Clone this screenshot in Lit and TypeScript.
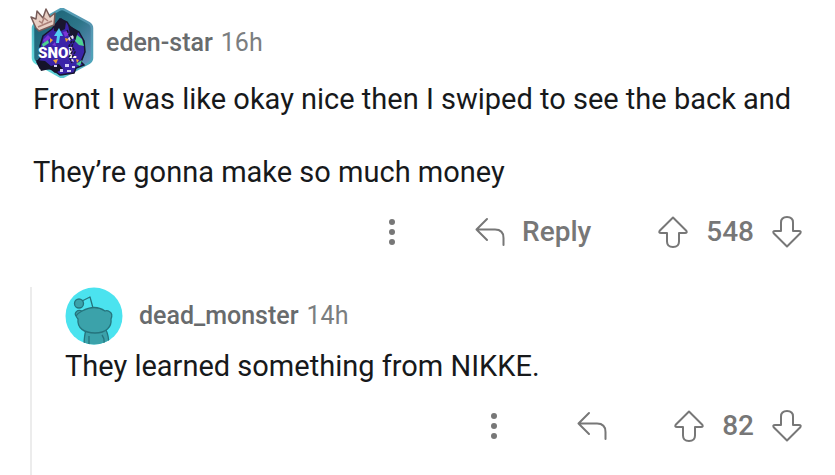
import { LitElement, html, svg, css, nothing } from "lit";
import { customElement, property } from "lit/decorators.js";

const moreIcon = html`<svg width="8" height="28" viewBox="0 0 8 28" fill="currentColor" aria-hidden="true">
  <circle cx="4" cy="4" r="3" /><circle cx="4" cy="14" r="3" /><circle cx="4" cy="24" r="3" />
</svg>`;

const replyIcon = html`<svg width="30" height="30" viewBox="0 0 30 30" fill="none" stroke="currentColor" stroke-width="2" stroke-linecap="round" stroke-linejoin="round" aria-hidden="true">
  <path d="M12 2 1.5 12.5 12 23M1.5 12.5H20q8.5 0 8.5 8.5V28" />
</svg>`;

const arrow = svg`<path d="M15 1.500 28.300 14.700Q29.500 17 27 17H21V25.500Q21 31 15 31T9 25.500V17H3Q.5 17 1.700 14.700Z" />`;

const upIcon = html`<svg width="30" height="32" viewBox="0 0 30 32" fill="none" stroke="currentColor" stroke-width="2" stroke-linejoin="round" aria-hidden="true">${arrow}</svg>`;
const downIcon = html`<svg width="30" height="32" viewBox="0 0 30 32" fill="none" stroke="currentColor" stroke-width="2" stroke-linejoin="round" aria-hidden="true"><g transform="rotate(180 15 16)">${arrow}</g></svg>`;

const hexAvatar = html`<svg width="64" height="70" viewBox="0 0 64 70" role="img" aria-label="eden-star avatar">
  <defs>
    <linearGradient id="bg" x1="0" y1="0" x2="1" y2="1">
      <stop offset="0" stop-color="#155d70" /><stop offset=".5" stop-color="#2d7589" /><stop offset="1" stop-color="#7a97d0" />
    </linearGradient>
    <linearGradient id="rim" x1="0" y1="1" x2="1" y2="0">
      <stop offset="0" stop-color="#6deae6" /><stop offset=".5" stop-color="#4ba9bd" /><stop offset="1" stop-color="#5b91ad" />
    </linearGradient>
  </defs>
  <path d="M29 2q3-2 6 0L59 15q3 2 3 5V50q0 3-3 5L35 68q-3 2-6 0L6 55q-3-2-3-5V20q0-3 3-5Z" fill="url(#bg)" stroke="url(#rim)" stroke-width="2.5" />
  <path d="M10 38 13 28 22 21 30 11 37 14 40 19 49 24 54 33 55 44 51 54 54 57 46 60 44 65 30 67 22 61 10 60 7 54 11 49Z" fill="#3a24a8" stroke="#17152f" stroke-width="1.500" />
  <path d="M24 18 31 10 36 14 35 21 29 24 24 23ZM38 16l10 8-2 7-6-4Z" fill="#1a1630" />
  <path d="M6 52l9 1 6 5 8-2 4 5-8 4-5-4-9 2Z" fill="#151329" />
  <path d="M13 32l5-5 3 3-7 5ZM33 24l4-1 2 4-4 2ZM22 37l3-3 1 4Z" fill="#7b35d6" />
  <path d="m26 35 1-7h-3l5-8 4 8h-3l-1 7Z" fill="#52cff3" />
  <path d="m47 27 5 4 2 7-5-1-4-4Zm-35 9 6-4 1 3-6 4Zm34 20 6-4-2 6Z" fill="#4dd190" />
  <path d="m20 30 3 2-3 3Zm15 0 4 1-3 3Zm-12 22 5-1-2 5Zm23-1 3 1-2 3Z" fill="#eda33b" />
  <path d="m38 30 5-3 1 3-5 3Zm1 22 4-1 1 3Z" fill="#e9dff0" />
  <text x="8" y="50" font-family="Roboto, sans-serif" font-size="15" font-weight="900" fill="#fff">SNOL</text>
  <path d="M37 22 42 33 39 38 42 44 39 49 42 55M42 21 45 31 42 38 45 44 42 50" fill="none" stroke="#191735" stroke-width="1.500" stroke-dasharray="3 1" />
  <path d="M35 56h4v3h-4ZM30 61h3v3h-3ZM42 58h3v2h-3ZM24 57h3v2h-3ZM37 62h4v2h-4Z" fill="#d7d2f4" />
  <path d="M6 20 1 9l5 2 1-8 6 7 3-9 4 8 5-4-1 12-15 6Z" fill="#e8cfc4" stroke="#775b58" stroke-width="1.500" stroke-linejoin="round" />
  <path d="m8 19 14-6M9 13l3 2 2-5 4 3" fill="none" stroke="#ab8179" stroke-width="1.500" />
</svg>`;

const snooAvatar = html`<svg width="58" height="58" viewBox="0 0 58 58" role="img" aria-label="dead_monster avatar">
  <defs><clipPath id="disc"><circle cx="29" cy="29" r="28.5" /></clipPath></defs>
  <circle cx="29" cy="29" r="28.5" fill="#4be3ef" />
  <g clip-path="url(#disc)" fill="#3ba2aa" stroke="#25747d" stroke-width="1.300" stroke-linejoin="round">
    <path d="M28 21 25 10 17 14" fill="none" />
    <circle cx="14" cy="16.5" r="4.500" />
    <path d="M21 43q-2 6-2 17h25q0-11-3-17Z" />
    <path d="M17 24C12 22 9 26 11 29q1 2 2 3C12 41 19 46 30 46s17-6 16-14q2-5-1-7-3-2-5-1-10-7-23 0Z" />
    <path d="M11 29q2-3 6-5M24 49v10M37 48q3 4 2 10" fill="none" />
  </g>
</svg>`;

@customElement("comment-item")
class CommentItem extends LitElement {
  @property() author = "";
  @property() age = "";
  @property({ type: Number }) score = 0;
  @property({ type: Array }) lines: string[] = [];
  @property({ attribute: false }) avatar: unknown = nothing;
  @property({ type: Boolean }) labelled = false;

  static styles = css`
    :host { display: block; }
    svg { display: block; flex: none; }
    header { display: flex; align-items: center; font-size: 25px; line-height: 32px; color: #7b7e80; }
    .avatar { margin-left: -3px; }
    :host([nested]) .avatar { margin-left: 0; }
    .author { margin-left: 12px; font-weight: 500; color: #686b6d; text-decoration: none; }
    :host([nested]) .author { margin-left: 16px; }
    time { margin-left: 8px; }
    p { margin: 0; font-size: 29px; line-height: 36px; color: #17191b; }
    .body { display: grid; gap: 37px; padding-top: 3px; }
    .actions { display: flex; justify-content: flex-end; align-items: center; margin-top: 24px; color: #777; }
    button { display: flex; align-items: center; gap: 17px; padding: 0; border: 0; background: none; color: inherit; font: 500 28px/36px Roboto, sans-serif; cursor: pointer; }
    .reply { margin-left: 79px; }
    .votes { display: flex; align-items: center; gap: 18px; margin-left: 67px; font-weight: 500; font-size: 28px; line-height: 36px; }
  `;

  render() {
    return html`<article>
      <header>
        <span class="avatar">${this.avatar}</span>
        <a class="author" href="#">${this.author}</a>
        <time>${this.age}</time>
      </header>
      <div class="body">${this.lines.map((line) => html`<p>${line}</p>`)}</div>
      <div class="actions">
        <button aria-label="More options">${moreIcon}</button>
        <button class="reply" aria-label="Reply">${replyIcon}${this.labelled ? html`<span>Reply</span>` : nothing}</button>
        <div class="votes">
          <button aria-label="Upvote">${upIcon}</button>
          <span>${this.score}</span>
          <button aria-label="Downvote">${downIcon}</button>
        </div>
      </div>
    </article>`;
  }
}

@customElement("app-root")
class AppRoot extends LitElement {
  static styles = css`
    :host { display: block; min-height: 100vh; background: #fff; font-family: Roboto, sans-serif; }
    main { display: flex; flex-direction: column; min-height: 100vh; box-sizing: border-box; padding: 8px 33px 0 30px; }
    .top { padding-left: 3px; }
    .thread { flex: 1; margin-top: 37px; padding-left: 33px; border-left: 2px solid #ececec; }
  `;

  render() {
    return html`<main>
      <comment-item class="top" author="eden-star" age="16h" .score=${548} labelled .avatar=${hexAvatar}
        .lines=${["Front I was like okay nice then I swiped to see the back and", "They’re gonna make so much money"]}></comment-item>
      <section class="thread" aria-label="Replies">
        <comment-item nested author="dead_monster" age="14h" .score=${82} .avatar=${snooAvatar}
          .lines=${["They learned something from NIKKE."]}></comment-item>
      </section>
    </main>`;
  }
}
